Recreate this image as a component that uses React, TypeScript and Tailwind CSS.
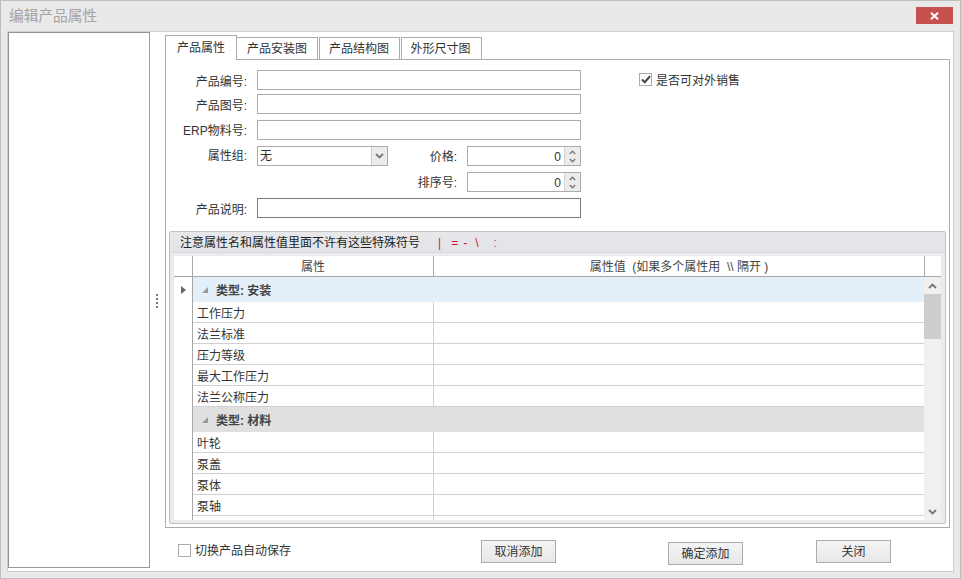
const Chevron = ({ up = false, small = false }: { up?: boolean; small?: boolean }) => (
  <svg width={small ? 7 : 9} height={small ? 5 : 6} viewBox="0 0 9 6">
    <polyline points={up ? "1,5 4.5,1.5 8,5" : "1,1 4.5,4.5 8,1"} fill="none" stroke="#777" strokeWidth="1.8" />
  </svg>
);

const Label = ({ children, className = "" }: { children: string; className?: string }) => (
  <div className={`h-[20px] w-[81px] shrink-0 text-right leading-[18px] ${className}`}>{children}</div>
);

const Spin = () => (
  <div className="ml-[10px] flex h-[20px] w-[114px] border border-[#ababab] bg-white">
    <div className="flex-1 pr-[3px] pt-[2px] text-right leading-[16px]">0</div>
    <div className="flex w-[16px] flex-col items-center justify-center gap-[3px] border-l border-[#d4d4d4] bg-[#ececec]">
      <Chevron up small />
      <Chevron small />
    </div>
  </div>
);

const Row = ({ name }: { name: string }) => (
  <div className="flex h-[21px] shrink-0 border-b border-[#d0d0d0]">
    <div className="w-[241px] border-r border-[#d0d0d0] pl-[4px] pt-[3px] leading-[19px]">{name}</div>
    <div className="flex-1" />
  </div>
);

const Group = ({ name, className }: { name: string; className: string }) => (
  <div className={`flex h-[25px] shrink-0 items-center ${className}`}>
    <svg width="6" height="6" viewBox="0 0 6 6" className="ml-[9px]">
      <polygon points="6,0 6,6 0,6" fill="#9a9a9a" />
    </svg>
    <span className="ml-[8px] pt-[3px] font-bold text-[#444]">{name}</span>
  </div>
);

const Tab = ({ name, className = "" }: { name: string; className?: string }) => (
  <div className={`flex h-[22px] w-[81px] items-center justify-center border border-b-0 border-[#ababab] bg-white ${className}`}>
    {name}
  </div>
);

const Button = ({ name, className = "" }: { name: string; className?: string }) => (
  <button className={`flex h-[23px] w-[75px] items-center justify-center border border-[#ababab] bg-gradient-to-b from-[#f4f4f4] to-[#e8e8e8] text-[#333] ${className}`}>
    {name}
  </button>
);

export default function App() {
  return (
    <div className="flex h-[579px] w-[961px] flex-col border border-[#bdbdbd] bg-[#e9e9e9] font-['Liberation_Sans','Noto_Sans_CJK_SC',sans-serif] text-[12px] text-[#333]">
      <div className="flex h-[30px] shrink-0">
        <div className="ml-[8px] mt-[4px] text-[14.7px] leading-[22px] text-[#a3a3a3]">编辑产品属性</div>
        <div className="ml-auto mr-[7px] mt-[6px] flex h-[17px] w-[37px] items-center justify-center bg-[#c75050]">
          <svg width="9" height="8" viewBox="0 0 9 8">
            <path d="M1 0.8 L8 7.2 M8 0.8 L1 7.2" stroke="#fff" strokeWidth="2" />
          </svg>
        </div>
      </div>

      <div className="mx-[6px] flex h-[541px] border border-[#cfcfcf] bg-white">
        <div className="h-[536px] w-[142px] shrink-0 border border-[#8e929c] border-r-[#9a9a9a] border-b-[#9a9a9a] bg-white" />
        <div className="flex w-[15px] shrink-0 flex-col items-center gap-[2px] pt-[262px] pr-[2px]">
          <div className="h-[2px] w-[2px] bg-[#777]" />
          <div className="h-[2px] w-[2px] bg-[#777]" />
          <div className="h-[2px] w-[2px] bg-[#777]" />
          <div className="h-[2px] w-[2px] bg-[#777]" />
        </div>

        <div className="flex w-[785px] flex-col pt-[2px]">
          <div className="flex h-[25px] items-end">
            <div className="relative z-10 -mb-px flex h-[25px] w-[72px] items-center justify-center border border-b-0 border-[#ababab] bg-white">
              产品属性
            </div>
            <Tab name="产品安装图" className="border-l-0" />
            <Tab name="产品结构图" className="ml-px pr-[1px]" />
            <Tab name="外形尺寸图" className="ml-px pr-[2px]" />
          </div>

          <div className="flex h-[469px] flex-col border border-[#ababab] bg-white">
            <div className="mt-[10px] flex h-[20px] items-start">
              <Label className="pt-[3px]">产品编号:</Label>
              <div className="ml-[10px] h-[20px] w-[324px] border border-[#ababab]" />
              <div className="ml-[58px] mt-[3px] flex h-[17px] items-start">
                <div className="flex h-[13px] w-[13px] items-center justify-center border border-[#ababab]">
                  <svg width="10" height="9" viewBox="0 0 10 9">
                    <path d="M1 4.5 L3.8 7.2 L9 1.2" fill="none" stroke="#444" strokeWidth="2" />
                  </svg>
                </div>
                <span className="ml-[4px] leading-[17px]">是否可对外销售</span>
              </div>
            </div>
            <div className="mt-[4px] flex items-start">
              <Label className="pt-[3px]">产品图号:</Label>
              <div className="ml-[10px] h-[20px] w-[324px] border border-[#ababab]" />
            </div>
            <div className="mt-[6px] flex items-start">
              <Label className="pt-[2px]">ERP物料号:</Label>
              <div className="ml-[10px] h-[20px] w-[324px] border border-[#ababab]" />
            </div>
            <div className="mt-[6px] flex items-start">
              <Label className="pt-[1px]">属性组:</Label>
              <div className="ml-[10px] flex h-[20px] w-[131px] border border-[#ababab]">
                <div className="flex-1 pl-[2px] pt-[1px] leading-[17px]">无</div>
                <div className="flex w-[16px] items-center justify-center border-l border-[#c8c8c8] bg-[#ececec]">
                  <Chevron />
                </div>
              </div>
              <div className="ml-[29px] h-[20px] w-[40px] pt-[2px] text-right leading-[18px]">价格:</div>
              <Spin />
            </div>
            <div className="mt-[6px] flex items-start">
              <div className="ml-[251px] h-[20px] w-[40px] pt-[2px] text-right leading-[18px]">排序号:</div>
              <Spin />
            </div>
            <div className="mt-[6px] flex items-start">
              <Label className="pt-[3px]">产品说明:</Label>
              <div className="ml-[10px] h-[20px] w-[324px] border border-[#7c7c7c]" />
            </div>

            <div className="mx-[3px] mt-[13px] flex h-[293px] flex-col overflow-hidden rounded-[2px] border border-[#c0c0c4] bg-[#eaebef]">
              <div className="flex h-[21px] shrink-0 items-center border-b border-[#d8d9dd] bg-gradient-to-b from-[#e8e8eb] to-[#e2e3e7] pl-[10px] pt-[2px]">
                <span className="text-[#222]">注意属性名和属性值里面不许有这些特殊符号</span>
                <span className="ml-[18px] text-[#e0102a]">|</span>
                <span className="ml-[10px] text-[#e0102a]">=</span>
                <span className="ml-[5px] text-[#e0102a]">-</span>
                <span className="ml-[8px] text-[#e0102a]">\</span>
                <span className="ml-[15px] text-[#e0407a]">:</span>
              </div>
              <div className="mx-[4px] mb-[3px] mt-[3px] flex min-h-0 flex-1 flex-col bg-white">
                <div className="flex h-[21px] shrink-0 border-b border-[#a8a8a8]">
                  <div className="w-[19px] border-r border-[#a8a8a8]" />
                  <div className="flex w-[241px] items-center justify-center border-r border-[#a8a8a8] pt-[1px] text-[#444]">属性</div>
                  <div className="flex w-[491px] items-center justify-center whitespace-pre border-r border-[#a8a8a8] pt-[1px] text-[#444]">属性值  (如果多个属性用  \\ 隔开 )</div>
                </div>
                <div className="flex min-h-0 flex-1">
                  <div className="flex w-[19px] shrink-0 justify-center border-r border-[#a8a8a8] pt-[9px]">
                    <svg width="5" height="8" viewBox="0 0 5 8">
                      <polygon points="0,0 5,4 0,8" fill="#666" />
                    </svg>
                  </div>
                  <div className="flex w-[731px] shrink-0 flex-col overflow-hidden">
                    <Group name="类型: 安装" className="bg-[#e3f0fa]" />
                    <Row name="工作压力" />
                    <Row name="法兰标准" />
                    <Row name="压力等级" />
                    <Row name="最大工作压力" />
                    <Row name="法兰公称压力" />
                    <Group name="类型: 材料" className="bg-[#e0e0e0]" />
                    <Row name="叶轮" />
                    <Row name="泵盖" />
                    <Row name="泵体" />
                    <Row name="泵轴" />
                    <Row name="" />
                  </div>
                  <div className="flex w-[17px] shrink-0 flex-col items-center bg-[#f0f0f0]">
                    <div className="flex h-[17px] items-center justify-center">
                      <Chevron up />
                    </div>
                    <div className="h-[45px] w-full bg-[#cdcdcd]" />
                    <div className="mt-auto flex h-[17px] items-center justify-center">
                      <Chevron />
                    </div>
                  </div>
                </div>
              </div>
            </div>
          </div>

          <div className="flex items-start">
            <div className="ml-[13px] mt-[16px] flex h-[13px] w-[13px] shrink-0 border border-[#ababab]" />
            <span className="ml-[4px] mt-[14px] leading-[18px]">切换产品自动保存</span>
            <Button name="取消添加" className="ml-[190px] mt-[12px]" />
            <Button name="确定添加" className="ml-[112px] mt-[14px]" />
            <Button name="关闭" className="ml-[73px] mt-[12px]" />
          </div>
        </div>
      </div>
    </div>
  );
}
